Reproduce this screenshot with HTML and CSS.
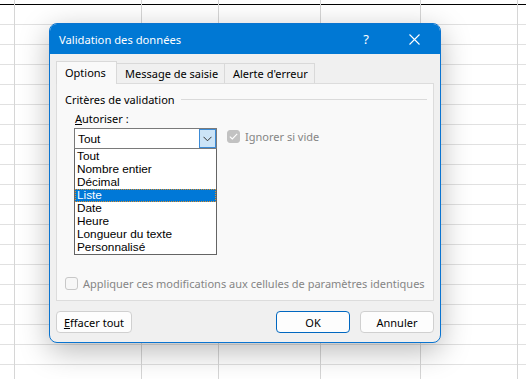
FILE: index.html
```html
<!DOCTYPE html>
<html lang="fr">
<head>
  <meta charset="UTF-8">
  <title>Validation des données</title>
  <link rel="stylesheet" href="styles.css">
</head>
<body>
  <div class="sheet">
    <div class="col" style="width:14px"></div>
    <div class="col" style="width:126px"></div>
    <div class="col" style="width:76px"></div>
    <div class="col" style="width:101px"></div>
    <div class="col" style="width:99px"></div>
    <div class="col" style="width:96px"></div>
  </div>

  <div class="dialog">
    <div class="titlebar">
      <span class="title">Validation des données</span>
      <span class="help">?</span>
      <svg class="close" width="11" height="11" viewBox="0 0 11 11">
        <path d="M0.5 0.5 L10.5 10.5 M10.5 0.5 L0.5 10.5" stroke="#fff" stroke-width="1.1" fill="none"/>
      </svg>
    </div>

    <div class="body">
      <div class="tabs">
        <div class="tab active" style="width:61px">Options</div>
        <div class="tab" style="width:109px">Message de saisie</div>
        <div class="tab" style="width:91px">Alerte d'erreur</div>
      </div>

      <div class="panel">
        <div class="group-title"><span>Critères de validation</span><div class="rule"></div></div>
        <div class="label"><u>A</u>utoriser :</div>

        <div class="combo-row">
          <div class="combo">
            <span class="combo-value">Tout</span>
            <div class="combo-btn">
              <svg width="9" height="6" viewBox="0 0 9 6"><path d="M0.5 0.8 L4.5 4.8 L8.5 0.8" stroke="#333" stroke-width="1" fill="none"/></svg>
            </div>
            <ul class="dropdown">
              <li>Tout</li>
              <li>Nombre entier</li>
              <li>Décimal</li>
              <li class="selected">Liste</li>
              <li>Date</li>
              <li>Heure</li>
              <li>Longueur du texte</li>
              <li>Personnalisé</li>
            </ul>
          </div>
          <label class="check disabled">
            <span class="box checked">
              <svg width="9" height="7" viewBox="0 0 9 7"><path d="M0.8 3.6 L3.3 6 L8.2 0.9" stroke="#fff" stroke-width="1.1" fill="none"/></svg>
            </span>
            Ignorer si vide
          </label>
        </div>

        <label class="check disabled apply">
          <span class="box"></span>
          Appliquer ces modifications aux cellules de paramètres identiques
        </label>
      </div>

      <div class="footer">
        <button class="btn"><u>E</u>ffacer tout</button>
        <div class="spacer"></div>
        <button class="btn default">OK</button>
        <button class="btn">Annuler</button>
      </div>
    </div>
  </div>
</body>
</html>
```

FILE: styles.css
```css
body {
  margin: 0;
  width: 526px;
  height: 379px;
  overflow: hidden;
  position: relative;
  background: #fff;
  font-family: "Noto Sans", "Segoe UI", sans-serif;
}
.sheet {
  display: flex;
  height: 379px;
  background:
    linear-gradient(#000, #000) 0 4px / 100% 1px no-repeat,
    linear-gradient(transparent 19px, #e1e1e1 19px) 0 5px / 100% 20px repeat-y;
}
.col {
  flex: none;
  border-right: 1px solid #d6d6d6;
}

.dialog {
  position: absolute;
  left: 49px;
  top: 23px;
  width: 390px;
  height: 318px;
  border: 1px solid #0a74d0;
  border-radius: 8px;
  overflow: hidden;
  background: #f0f0f0;
  box-shadow: 0 8px 30px rgba(0, 0, 0, 0.28);
  display: flex;
  flex-direction: column;
}
.titlebar {
  height: 30px;
  background: #0078d4;
  color: #fff;
  display: flex;
  align-items: center;
  padding-left: 9px;
  font-size: 11.2px;
}
.title {
  flex: 1;
}
.help {
  font-size: 13px;
  margin-right: 40px;
}
.close {
  margin-right: 20px;
}

.body {
  flex: 1;
  padding: 7px 6px 0 6px;
  font-size: 11px;
  color: #000;
  white-space: nowrap;
}
.tabs {
  display: flex;
  align-items: flex-end;
  height: 22px;
}
.tab {
  box-sizing: border-box;
  height: 20px;
  line-height: 19px;
  padding-left: 8px;
  border: 1px solid #d9d9d9;
  border-bottom: none;
  margin-right: -1px;
  background: #f0f0f0;
}
.tab.active {
  line-height: 21px;
  background: #f9f9f9;
  position: relative;
  z-index: 1;
  margin-bottom: -1px;
  height: 23px;
}
.panel {
  box-sizing: border-box;
  height: 218px;
  width: 378px;
  border: 1px solid #dcdcdc;
  background: #f9f9f9;
  padding: 8px 6px 0 8px;
}
.group-title {
  display: flex;
  align-items: center;
  height: 14px;
}
.rule {
  flex: 1;
  height: 1px;
  background: #dadada;
  margin-left: 6px;
}
.label {
  margin: 6px 0 0 10px;
  height: 14px;
  line-height: 14px;
}
.combo-row {
  display: flex;
  align-items: flex-start;
  margin: 2px 0 0 9px;
}
.combo {
  position: relative;
  box-sizing: border-box;
  width: 143px;
  height: 21px;
  border: 1px solid #7a7a7a;
  background: #fff;
  display: flex;
  align-items: center;
  font-family: "Liberation Sans", Arial, sans-serif;
  font-size: 11.8px;
}
.combo-value {
  flex: 1;
  padding-left: 3px;
}
.combo-btn {
  box-sizing: border-box;
  width: 17px;
  height: 19px;
  background: #cce4f7;
  border: 1px solid #3c8bd6;
  display: flex;
  align-items: center;
  justify-content: center;
}
.dropdown {
  position: absolute;
  left: -1px;
  top: 20px;
  width: 143px;
  box-sizing: border-box;
  margin: 0;
  padding: 0;
  list-style: none;
  background: #fff;
  border: 1px solid #646464;
  border-top: none;
  z-index: 2;
}
.dropdown li {
  height: 13px;
  line-height: 13px;
  padding-left: 2px;
}
.dropdown li:first-child {
  margin-top: 1px;
}
.dropdown li.selected {
  background: #0078d7;
  color: #fff;
  outline: 1px dotted #e0902a;
  outline-offset: -1px;
}
.check {
  display: flex;
  align-items: center;
  gap: 5px;
}
.check.disabled {
  color: #858585;
}
.combo-row .check {
  margin: 1px 0 0 10px;
}
.box {
  box-sizing: border-box;
  width: 13px;
  height: 13px;
  border-radius: 3px;
  border: 1px solid #c8c8c8;
  background: #f7f7f7;
  display: flex;
  align-items: center;
  justify-content: center;
}
.box.checked {
  background: #c2c2c2;
  border-color: #c2c2c2;
}
.apply {
  margin-top: 127px;
}

.footer {
  display: flex;
  margin-top: 10px;
}
.spacer {
  flex: 1;
}
.btn {
  box-sizing: border-box;
  height: 22px;
  width: 74px;
  border: 1px solid #d0d0d0;
  border-radius: 4px;
  background: #fdfdfd;
  font-family: inherit;
  font-size: 11px;
  color: #000;
  padding: 0;
}
.btn:first-child {
  width: 76px;
}
.btn.default {
  border-color: #0067c0;
  margin-right: 10px;
}
```
